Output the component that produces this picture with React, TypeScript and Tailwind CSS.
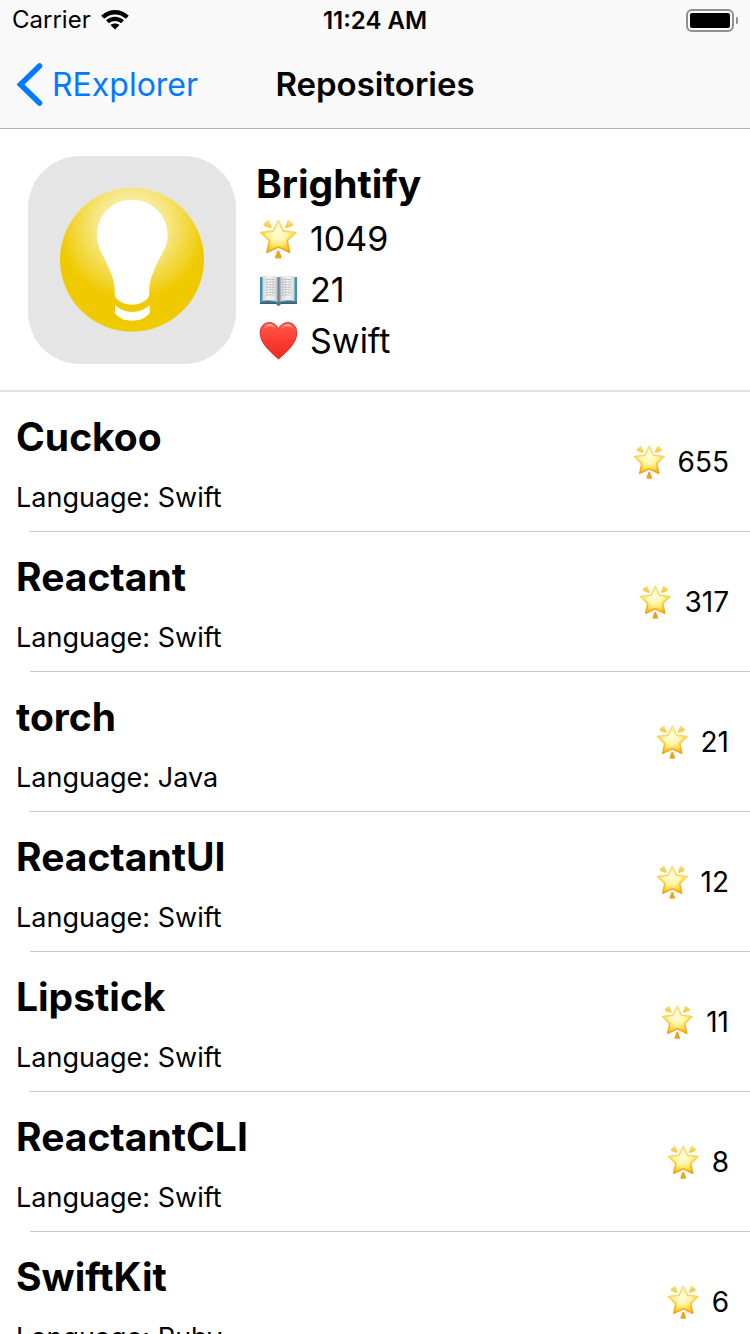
import React from "react";

type Repository = { name: string; language: string; stars: number };

const repositories: Repository[] = [
  { name: "Cuckoo", language: "Swift", stars: 655 },
  { name: "Reactant", language: "Swift", stars: 317 },
  { name: "torch", language: "Java", stars: 21 },
  { name: "ReactantUI", language: "Swift", stars: 12 },
  { name: "Lipstick", language: "Swift", stars: 11 },
  { name: "ReactantCLI", language: "Swift", stars: 8 },
  { name: "SwiftKit", language: "Ruby", stars: 6 },
];

function StarIcon({ className }: { className: string }) {
  return (
    <svg viewBox="0 0 40 40" className={className} aria-hidden="true">
      <defs>
        <linearGradient id="star-edge" x1="0" y1="0" x2="0" y2="1">
          <stop offset="0" stopColor="#f8e08a" />
          <stop offset="0.5" stopColor="#fbd044" />
          <stop offset="1" stopColor="#f0a010" />
        </linearGradient>
        <linearGradient id="star-spark" x1="0" y1="0" x2="0" y2="1">
          <stop offset="0" stopColor="#fbe27c" />
          <stop offset="1" stopColor="#f3c23c" />
        </linearGradient>
        <radialGradient id="star-face" cx="0.48" cy="0.38" r="0.62">
          <stop offset="0" stopColor="#fffde0" />
          <stop offset="0.45" stopColor="#fff6a8" />
          <stop offset="0.7" stopColor="#fee05c" />
          <stop offset="1" stopColor="#fbb814" />
        </radialGradient>
      </defs>
      <path d="M5.600 6Q5.200 4.800 6.200 4.200L9.800 1.300Q11 0.600 11.400 2L13.600 8Q13.800 9.600 12.200 9.100L6.800 7.300Q5.900 7 5.600 6Z" fill="url(#star-spark)" />
      <path d="M35 6Q35.400 4.800 34.400 4.200L30.800 1.300Q29.600 0.600 29.200 2L27 8Q26.800 9.600 28.400 9.100L33.800 7.300Q34.700 7 35 6Z" fill="url(#star-spark)" />
      <path d="M19.300 32.200Q20.300 30.600 21.300 32.200L23.500 37.800Q23.800 39.600 22 39.600H18.600Q16.800 39.600 17.100 37.800Z" fill="#eda31f" />
      <path
        d="M20.300 1.400L25.400 12L37.800 13.600L29.100 21.600L31.500 33.300L20.300 28L9.100 33.300L11.500 21.600L2.800 13.600L15.200 12Z"
        fill="url(#star-face)"
        stroke="url(#star-edge)"
        strokeWidth="1.800"
        strokeLinejoin="round"
      />
    </svg>
  );
}

function BookIcon() {
  return (
    <svg viewBox="0 0 40 40" className="size-10" aria-hidden="true">
      <defs>
        <linearGradient id="page-left" x1="0" x2="1">
          <stop offset="0" stopColor="#d6d6d8" />
          <stop offset="0.4" stopColor="#f4f4f5" />
          <stop offset="0.8" stopColor="#e2e2e4" />
          <stop offset="1" stopColor="#85858a" />
        </linearGradient>
        <linearGradient id="page-right" x1="1" x2="0">
          <stop offset="0" stopColor="#d6d6d8" />
          <stop offset="0.4" stopColor="#f4f4f5" />
          <stop offset="0.8" stopColor="#dadadc" />
          <stop offset="1" stopColor="#707076" />
        </linearGradient>
      </defs>
      <path d="M2 7H39V34H23Q20.500 36 18 34H2Z" fill="#3b92b8" />
      <path d="M2 32.500H39V34H2Z" fill="#246583" />
      <path d="M4 29.500L18.500 33H22.500L37 29.500V32.800H22.500L20.500 34.200L18.500 32.800H4Z" fill="#68686d" />
      <path d="M4.500 6.300Q14.500 4 20.500 7.500V32.500Q14.500 29 4.500 31Z" fill="url(#page-left)" />
      <path d="M36.500 6.300Q26.500 4 20.500 7.500V32.500Q26.500 29 36.500 31Z" fill="url(#page-right)" />
      <path
        d="M8 10Q12 8.600 17 10M8 12.600Q12 11.200 17 12.600M8 15.200Q12 13.800 17 15.200M8 17.800Q12 16.400 17 17.800M8 20.400Q12 19 17 20.400M8 23Q12 21.600 17 23M8 25.600Q12 24.200 15 25M24 10Q28 8.600 33 10M24 12.600Q28 11.200 33 12.600M24 15.200Q28 13.800 33 15.200M24 17.800Q28 16.400 33 17.800M24 20.400Q28 19 33 20.400M24 23Q28 21.600 33 23M24 25.600Q28 24.200 31 25"
        fill="none"
        stroke="#a5a5aa"
        strokeWidth="0.800"
        strokeDasharray="2.600 0.500"
      />
      <path d="M18 33H23L21.800 35.800H19.200Z" fill="#77733f" />
    </svg>
  );
}

function HeartIcon() {
  return (
    <svg viewBox="0 0 40 40" className="size-10" aria-hidden="true">
      <defs>
        <linearGradient id="heart-fill" x1="0" y1="0" x2="0" y2="1">
          <stop offset="0" stopColor="#ff5a48" />
          <stop offset="0.5" stopColor="#fb3c30" />
          <stop offset="1" stopColor="#f02a20" />
        </linearGradient>
        <linearGradient id="heart-shine" x1="0" y1="0" x2="0" y2="1">
          <stop offset="0" stopColor="#ffb4a8" />
          <stop offset="1" stopColor="#ff5a48" stopOpacity="0" />
        </linearGradient>
      </defs>
      <path
        d="M20.500 7.800C22.500 3.800 26 1.600 29.800 1.600C35.200 1.600 38.800 6 38.800 11.800C38.800 22 29.500 30 20.500 38C11.500 30 2.200 22 2.200 11.800C2.200 6 5.800 1.600 11.200 1.600C15 1.600 18.500 3.800 20.500 7.800Z"
        fill="url(#heart-fill)"
        stroke="#d3241d"
        strokeWidth="0.900"
      />
      <path d="M4.500 10Q6 3.400 11.500 3Q16.500 3.500 19 8Q14 4.800 10 6Q6 7 4.500 10Z" fill="url(#heart-shine)" />
      <path d="M36.500 10Q35 3.400 29.500 3Q24.500 3.500 22 8Q27 4.800 31 6Q35 7 36.500 10Z" fill="url(#heart-shine)" />
    </svg>
  );
}

function BrightifyLogo() {
  return (
    <svg viewBox="0 0 208 208" className="size-52 shrink-0" role="img" aria-label="Brightify">
      <defs>
        <radialGradient id="bulb-glow" gradientUnits="userSpaceOnUse" cx="104" cy="70" r="74">
          <stop offset="0" stopColor="#fdf6cf" />
          <stop offset="0.45" stopColor="#f8e88e" />
          <stop offset="0.75" stopColor="#f3d83f" />
          <stop offset="1" stopColor="#f0ca00" />
        </radialGradient>
      </defs>
      <rect width="208" height="208" rx="52" fill="#e5e5e5" />
      <circle cx="104" cy="103.700" r="72" fill="url(#bulb-glow)" />
      <path
        d="M104 43.700C84 43.700 69 59.500 69 79C69 86 70.500 91 73 96C80 109 86.700 123 86.700 134V138.500C86.700 143 94.500 148.700 104 148.700C113.500 148.700 121.300 143 121.300 138.500V134C121.300 122 128 109 135 96C138 91 139.700 86 139.700 79C139.700 59.500 124 43.700 104 43.700Z"
        fill="#fff"
      />
      <path d="M87 149Q94 156 104.300 156Q114.500 156 121.700 149V157C117 162.500 112 164.700 104.300 164.700C96.500 164.700 91 162.500 87 157Z" fill="#fff" />
    </svg>
  );
}

function StatusBar() {
  return (
    <div className="grid h-10 grid-cols-[1fr_auto_1fr] items-center pr-3 pl-3 text-2xl">
      <div className="flex items-center gap-2.5">
        <span>Carrier</span>
        <svg viewBox="0 0 28 20" className="h-5 w-7" aria-label="Wi-Fi">
          <path d="M0.200 5.700C8 -1.900 20 -1.900 27.800 5.700L24.800 8.700C18.600 3 9.400 3 3.200 8.700Z" />
          <path d="M5 10.300C10.200 5.600 17.800 5.600 23 10.300L20 13.300C16.500 10.300 11.500 10.300 8 13.300Z" />
          <path d="M9.500 14.900C12 12.900 16 12.900 18.500 14.900L14 19.600Z" />
        </svg>
      </div>
      <div className="pt-px text-center font-semibold">11:24 AM</div>
      <svg viewBox="0 0 54 24" className="h-6 w-[54px] justify-self-end" aria-label="Battery full">
        <rect x="3" y="2" width="46" height="21" rx="5" fill="none" stroke="#909090" strokeWidth="2" />
        <rect x="6" y="5" width="40" height="15" rx="2" />
        <path d="M52 8.500Q55 10 55 12.500Q55 15 52 16.500Z" fill="#909090" />
      </svg>
    </div>
  );
}

export default function App() {
  return (
    <div className="flex h-screen flex-col overflow-hidden bg-white font-['Inter','Liberation_Sans',sans-serif] text-black">
      <header className="shrink-0 border-b border-[#b2b2b2] bg-[#f9f9f9]">
        <StatusBar />
        <nav className="grid h-[88px] grid-cols-[1fr_auto_1fr] items-center px-4 pt-0.5">
          <a href="#explorer" className="flex items-center gap-2 text-[32px] text-[#007aff]">
            <svg viewBox="0 0 28 44" className="h-11 w-7" aria-hidden="true">
              <path d="M23.500 3L4.500 21.500L23.500 40" fill="none" stroke="currentColor" strokeWidth="5.500" strokeLinecap="round" />
            </svg>
            <span>RExplorer</span>
          </a>
          <h1 className="text-[33px] font-semibold">Repositories</h1>
        </nav>
      </header>
      <main className="min-h-0 flex-1 overflow-y-auto [scrollbar-width:none]">
        <section className="flex gap-5 border-b-2 border-[#e0e0e0] px-7 pt-[27px] pb-6">
          <BrightifyLogo />
          <div className="pt-0.5 text-[34px] leading-[51px]">
            <h2 className="mb-1 text-[39px] font-bold">Brightify</h2>
            <p className="flex items-center gap-3 pl-0.5">
              <StarIcon className="size-10" />
              1049
            </p>
            <p className="flex items-center gap-3 pl-0.5">
              <BookIcon />
              21
            </p>
            <p className="flex items-center gap-3 pl-0.5">
              <HeartIcon />
              Swift
            </p>
          </div>
        </section>
        <ul>
          {repositories.map((repo) => (
            <li key={repo.name}>
              <div className="flex h-[139px] items-center justify-between pr-[21px] pl-4">
                <div className="pt-3.5">
                  <h2 className="text-[39px] leading-[58px] font-bold">{repo.name}</h2>
                  <p className="text-[27px] leading-[64px]">Language: {repo.language}</p>
                </div>
                <p className="flex items-center gap-3 pt-px text-[28px]">
                  <StarIcon className="size-[34px]" />
                  {repo.stars}
                </p>
              </div>
              <div className="ml-[30px] border-b border-[#c8c7cc]" />
            </li>
          ))}
        </ul>
      </main>
    </div>
  );
}
